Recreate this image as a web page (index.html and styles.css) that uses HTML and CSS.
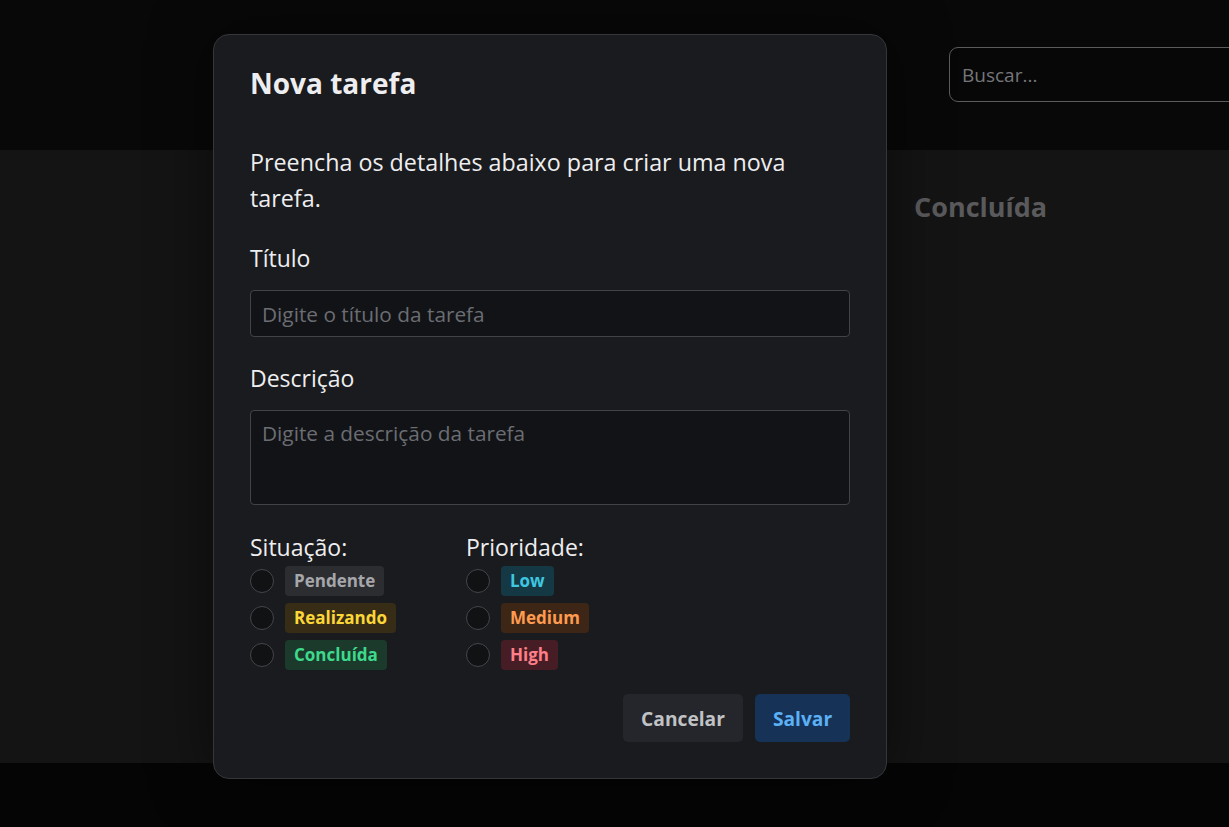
FILE: index.html
```html
<!DOCTYPE html>
<html lang="pt-BR">
<head>
<meta charset="utf-8">
<title>Nova tarefa</title>
<link rel="stylesheet" href="styles.css">
</head>
<body>
<div class="app">
  <header class="topbar">
    <input class="search" type="text" placeholder="Buscar...">
  </header>
  <main class="board">
    <section class="column">
      <h2 class="column-title">Concluída</h2>
    </section>
  </main>
  <footer class="bottom"></footer>
</div>

<div class="modal">
  <h1 class="modal-title">Nova tarefa</h1>
  <p class="modal-desc">Preencha os detalhes abaixo para criar uma nova tarefa.</p>

  <label class="field-label">Título</label>
  <input class="text-input" type="text" placeholder="Digite o título da tarefa">

  <label class="field-label">Descrição</label>
  <textarea class="text-area" placeholder="Digite a descrição da tarefa"></textarea>

  <div class="options">
    <div class="group">
      <div class="group-label">Situação:</div>
      <label class="opt"><span class="radio"></span><span class="badge gray">Pendente</span></label>
      <label class="opt"><span class="radio"></span><span class="badge yellow">Realizando</span></label>
      <label class="opt"><span class="radio"></span><span class="badge green">Concluída</span></label>
    </div>
    <div class="group">
      <div class="group-label">Prioridade:</div>
      <label class="opt"><span class="radio"></span><span class="badge cyan">Low</span></label>
      <label class="opt"><span class="radio"></span><span class="badge orange">Medium</span></label>
      <label class="opt"><span class="radio"></span><span class="badge red">High</span></label>
    </div>
  </div>

  <div class="actions">
    <button class="btn btn-cancel">Cancelar</button>
    <button class="btn btn-save">Salvar</button>
  </div>
</div>
</body>
</html>
```

FILE: styles.css
```css
* { box-sizing: border-box; }
html, body { margin: 0; padding: 0; }
body {
  width: 1229px;
  height: 827px;
  overflow: hidden;
  background: #050505;
  font-family: "Open Sans", "Noto Sans", sans-serif;
  color: #e9e9ea;
  position: relative;
}
.app {
  display: flex;
  flex-direction: column;
  height: 827px;
}
.topbar {
  height: 150px;
  background: #080808;
  display: flex;
  justify-content: flex-end;
  padding-top: 47px;
}
.search {
  width: 300px;
  height: 55px;
  margin-right: -20px;
  border: 1px solid #5b5b5d;
  border-radius: 9px;
  background: #070707;
  padding: 0 12px;
  font-family: inherit;
  font-size: 19px;
  color: #777;
}
.search::placeholder { color: #76767a; }
.board {
  height: 613px;
  background: #141414;
  display: flex;
  justify-content: flex-end;
  padding: 38px 0 0 0;
}
.column { width: 315px; }
.column-title {
  margin: 0;
  font-size: 27px;
  font-weight: 700;
  color: #5a5a5c;
}
.bottom { flex: 1; background: #050505; }

.modal {
  position: absolute;
  left: 213px;
  top: 34px;
  width: 674px;
  height: 745px;
  background: #1a1b1e;
  border: 1px solid #35363a;
  border-radius: 16px;
  box-shadow: 0 0 60px rgba(0,0,0,0.5);
  padding: 29px 36px 0 36px;
  display: flex;
  flex-direction: column;
}
.modal-title {
  margin: 0;
  font-size: 28px;
  line-height: 38px;
  font-weight: 700;
  color: #eeeef0;
}
.modal-desc {
  margin: 42px 0 0 0;
  font-size: 23.3px;
  line-height: 36px;
  color: #eeeef0;
}
.field-label {
  display: block;
  margin-top: 27px;
  font-size: 23px;
  line-height: 30px;
  color: #eeeef0;
}
.text-input, .text-area {
  display: block;
  width: 600px;
  margin-top: 17px;
  background: #121316;
  border: 1px solid #424348;
  border-radius: 4px;
  padding: 0 11px;
  font-family: inherit;
  font-size: 20.8px;
  color: #ddd;
}
.text-input { height: 47px; }
.text-area {
  height: 95px;
  padding-top: 9px;
  resize: none;
  line-height: 26px;
}
.text-input::placeholder, .text-area::placeholder { color: #6b6d73; }
.text-input + .field-label { margin-top: 26px; }
.options {
  display: flex;
  gap: 70px;
  margin-top: 27px;
}
.group { display: flex; flex-direction: column; }
.group-label {
  font-size: 23px;
  line-height: 30px;
  color: #eeeef0;
}
.opt {
  display: flex;
  align-items: center;
  gap: 11px;
  height: 37px;
}
.radio {
  width: 24px;
  height: 24px;
  border-radius: 50%;
  border: 1px solid #45464b;
  background: #111214;
}
.badge {
  font-size: 17px;
  font-weight: 700;
  line-height: 30px;
  height: 30px;
  padding: 0 9px;
  border-radius: 4px;
}
.gray { background: #2c2d31; color: #a6a7ab; }
.yellow { background: #372d16; color: #fcd738; }
.green { background: #1b3a2c; color: #3fd98b; }
.cyan { background: #143944; color: #3fc6e0; }
.orange { background: #3d2616; color: #ff9b4f; }
.red { background: #461d25; color: #ff7f89; }

.actions {
  display: flex;
  justify-content: flex-end;
  gap: 12px;
  margin-top: 21px;
}
.btn {
  height: 48px;
  border: none;
  border-radius: 5px;
  font-family: inherit;
  font-size: 19.2px;
  font-weight: 700;
  padding: 0 16px;
}
.btn-cancel { background: #25262b; color: #c1c2c5; width: 120px; }
.btn-save { background: #163257; color: #5cb0f5; width: 95px; }
```
